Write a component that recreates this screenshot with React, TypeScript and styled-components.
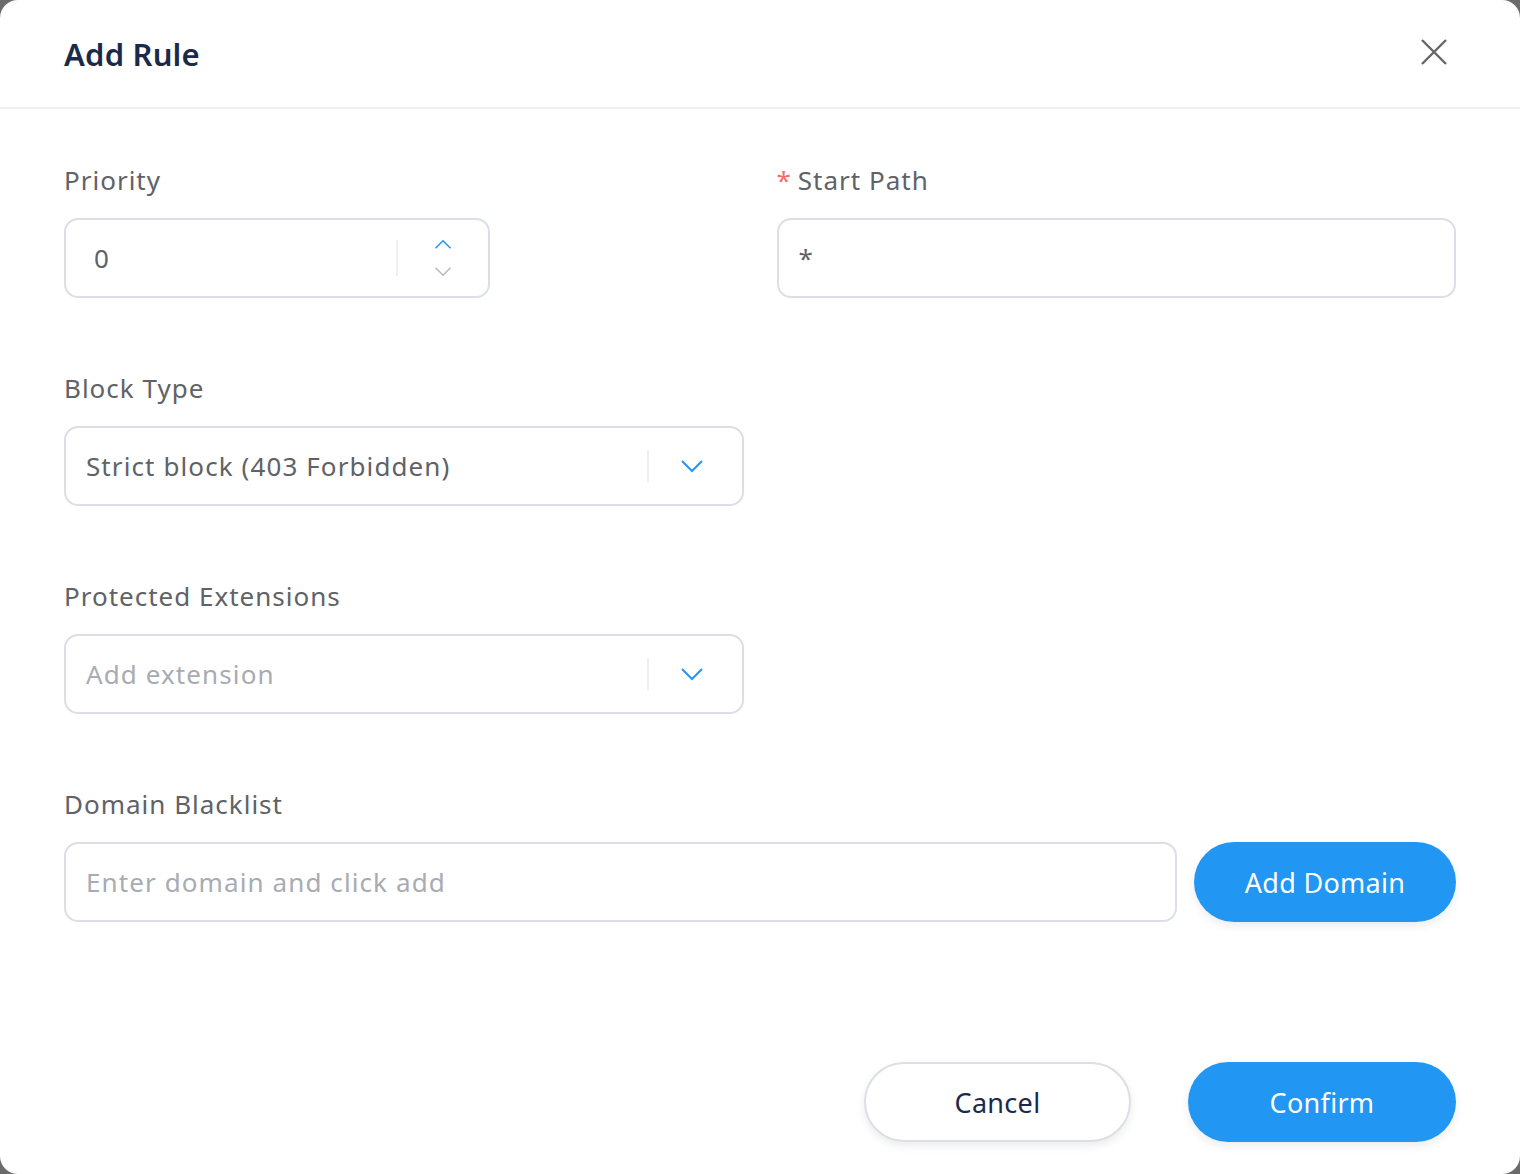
import React from "react";
import styled, { createGlobalStyle } from "styled-components";

const GlobalStyle = createGlobalStyle`
  html, body {
    margin: 0;
    padding: 0;
    background: #6b6b6b;
    font-family: "Noto Sans", "Liberation Sans", Arial, sans-serif;
  }
  * {
    box-sizing: border-box;
  }
`;

const Dialog = styled.div`
  width: 1520px;
  height: 1174px;
  background: #fff;
  border-radius: 18px;
  display: flex;
  flex-direction: column;
  overflow: hidden;
`;

const Header = styled.div`
  height: 109px;
  border-bottom: 2px solid #edf1f5;
  display: flex;
  align-items: center;
  justify-content: space-between;
  padding: 0 64px 0 64px;
`;

const Title = styled.h2`
  margin: 0;
  font-size: 31px;
  font-weight: 600;
  color: #1b2a4a;
  letter-spacing: 0.2px;
`;

const CloseButton = styled.button`
  border: none;
  background: none;
  padding: 0;
  margin-right: 4px;
  margin-top: -4px;
  width: 36px;
  height: 36px;
  display: flex;
  align-items: center;
  justify-content: center;
  cursor: pointer;
`;

const Body = styled.div`
  flex: 1;
  padding: 53px 64px 0 64px;
  display: flex;
  flex-direction: column;
  gap: 72px;
`;

const Row = styled.div`
  display: grid;
  grid-template-columns: 1fr 1fr;
  column-gap: 33px;
`;

const Field = styled.div`
  display: flex;
  flex-direction: column;
  gap: 20px;
`;

const Label = styled.label`
  font-size: 26px;
  line-height: 36px;
  color: #606266;
  letter-spacing: 1px;
  display: flex;
  align-items: center;
`;

const Required = styled.span`
  color: #f56c6c;
  margin-right: 6px;
  font-size: 26px;
`;

const Box = styled.div<{ $width?: string }>`
  width: ${(p) => p.$width || "100%"};
  height: 80px;
  border: 2px solid #dcdfe6;
  border-radius: 14px;
  display: flex;
  align-items: center;
  padding: 0 20px;
  background: #fff;
`;

const Text = styled.span<{ $placeholder?: boolean }>`
  flex: 1;
  font-size: 26px;
  letter-spacing: 1.1px;
  color: ${(p) => (p.$placeholder ? "#a8abb2" : "#606266")};
  white-space: nowrap;
`;

const Divider = styled.span`
  width: 2px;
  height: 32px;
  background: #edf0f4;
`;

const Stepper = styled.div`
  width: 90px;
  display: flex;
  flex-direction: column;
  align-items: center;
  gap: 16px;
  margin-right: -20px;
`;

const Arrow = styled.div`
  width: 44px;
  display: flex;
  justify-content: center;
  margin-left: 21px;
  margin-right: 8px;
`;

const DomainRow = styled.div`
  display: flex;
  gap: 17px;
`;

const PillButton = styled.button<{ $primary?: boolean; $width: string }>`
  width: ${(p) => p.$width};
  height: 80px;
  flex-shrink: 0;
  border-radius: 40px;
  font-family: "Noto Sans", "Liberation Sans", Arial, sans-serif;
  font-size: 27px;
  letter-spacing: 0.3px;
  cursor: pointer;
  border: ${(p) => (p.$primary ? "none" : "2px solid #dcdfe6")};
  background: ${(p) => (p.$primary ? "#2196f3" : "#fff")};
  color: ${(p) => (p.$primary ? "#fff" : "#1b2a4a")};
  box-shadow: 0 4px 10px rgba(0, 0, 0, 0.08);
`;

const Footer = styled.div`
  display: flex;
  justify-content: flex-end;
  gap: 57px;
  padding: 0 64px 32px 64px;
`;

const ChevronDown = ({ color, size }: { color: string; size: number }) => (
  <svg width={size} height={size / 2 + 2} viewBox="0 0 24 14" fill="none">
    <path d="M2 2 L12 12 L22 2" stroke={color} strokeWidth="2" />
  </svg>
);

const ChevronUp = ({ color, size }: { color: string; size: number }) => (
  <svg width={size} height={size / 2 + 2} viewBox="0 0 24 14" fill="none">
    <path d="M2 12 L12 2 L22 12" stroke={color} strokeWidth="2" />
  </svg>
);

const Select = ({ value, placeholder }: { value?: string; placeholder?: string }) => (
  <Box>
    <Text $placeholder={!value}>{value || placeholder}</Text>
    <Divider />
    <Arrow>
      <ChevronDown color="#2196f3" size={24} />
    </Arrow>
  </Box>
);

export default function App() {
  return (
    <>
      <GlobalStyle />
      <Dialog>
        <Header>
          <Title>Add Rule</Title>
          <CloseButton aria-label="close">
            <svg width="26" height="26" viewBox="0 0 26 26">
              <path d="M1 1 L25 25 M25 1 L1 25" stroke="#666" strokeWidth="2.4" />
            </svg>
          </CloseButton>
        </Header>
        <Body>
          <Row>
            <Field>
              <Label>Priority</Label>
              <Box $width="426px" style={{ paddingLeft: 28 }}>
                <Text>0</Text>
                <Divider style={{ height: 36 }} />
                <Stepper>
                  <ChevronUp color="#2196f3" size={18} />
                  <ChevronDown color="#b5b8bf" size={18} />
                </Stepper>
              </Box>
            </Field>
            <Field>
              <Label>
                <Required>*</Required>Start Path
              </Label>
              <Box>
                <Text>*</Text>
              </Box>
            </Field>
          </Row>
          <Row>
            <Field>
              <Label>Block Type</Label>
              <Select value="Strict block (403 Forbidden)" />
            </Field>
          </Row>
          <Row>
            <Field>
              <Label>Protected Extensions</Label>
              <Select placeholder="Add extension" />
            </Field>
          </Row>
          <Field>
            <Label>Domain Blacklist</Label>
            <DomainRow>
              <Box>
                <Text $placeholder>Enter domain and click add</Text>
              </Box>
              <PillButton $primary $width="262px">
                Add Domain
              </PillButton>
            </DomainRow>
          </Field>
        </Body>
        <Footer>
          <PillButton $width="267px">Cancel</PillButton>
          <PillButton $primary $width="268px">
            Confirm
          </PillButton>
        </Footer>
      </Dialog>
    </>
  );
}
